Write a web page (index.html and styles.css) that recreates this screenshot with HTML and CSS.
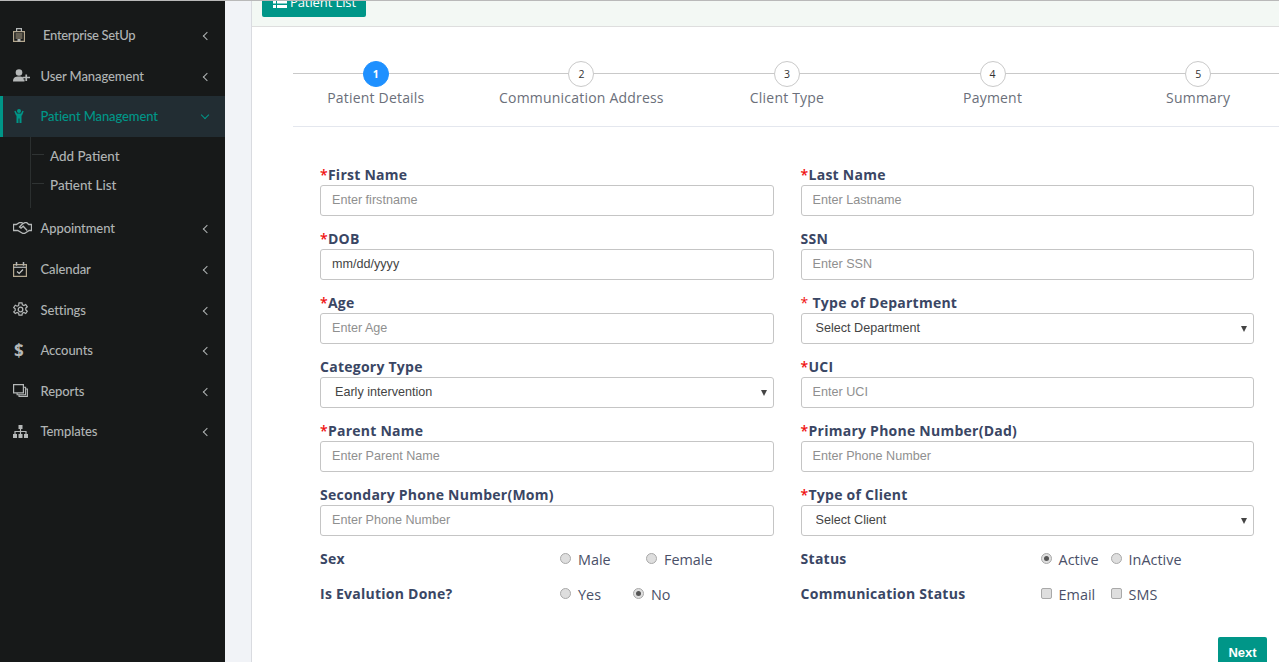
FILE: index.html
```html
<!DOCTYPE html>
<html lang="en">
<head>
<meta charset="utf-8">
<title>Patient Details</title>
<link rel="stylesheet" href="styles.css">
</head>
<body>
<div class="topline"></div>
<div class="app">
  <aside class="sidebar">
    <ul class="menu">
      <li class="item"><span class="ico-box"><svg class="ico ico-hosp" viewBox="0 0 12 14"><path d="M.6 3.600h10.800v9.800H.6z" fill="none" stroke="#b5a88f" stroke-width="1.200"/><path d="M3.600 3.500V.7h4.800v2.800" fill="none" stroke="#b5b8b8" stroke-width="1.200"/><path d="M2.500 6h7M2.500 8h7M2.500 10h7" stroke="#b5a88f" stroke-width="1"/><path d="M4.500 11h3v2.500h-3z" fill="#b5b8b8"/></svg></span><span class="label label-first">Enterprise SetUp</span><span class="chev"></span></li>
      <li class="item"><span class="ico-box"><svg class="ico ico-user" viewBox="0 0 17 13"><circle cx="6" cy="3.500" r="3.300" fill="#b5b8b8"/><path d="M0 12.500c0-4 2-5 6-5 2 0 3.500.4 4.500 1.500v1.500h1v2z" fill="#b5b8b8"/><path d="M9.500 8.500h7.500M13.250 5.500v6.500" stroke="#b5b8b8" stroke-width="1.700"/></svg></span><span class="label">User Management</span><span class="chev"></span></li>
      <li class="item active"><span class="ico-box"><svg class="ico ico-patient" viewBox="0 0 10 14"><circle cx="5" cy="2" r="2" fill="#009688"/><path d="M.3 2.200l1.300-.5L3 4.500h4l1.400-2.800 1.300.5L8 6.500H7.500V14H5.500V9.500h-1V14H2.500V6.500H2z" fill="#009688"/></svg></span><span class="label">Patient Management</span><span class="chev down"></span></li>
      <li class="sub">
        <a class="sub-link">Add Patient</a>
        <a class="sub-link">Patient List</a>
      </li>
      <li class="item"><span class="ico-box"><svg class="ico ico-hand" viewBox="0 0 19 12"><path d="M.5 2.500h2.800l3-1.800h2.500l1.500.8 1.500-.8h2l2 1.800h2.700v6h-2.300l-4.700 3h-1.500l-5.300-3H.5z" fill="none" stroke="#b5b8b8" stroke-width="1.300"/><path d="M9.800 1.500L6.500 5l1.500 1.200 2.200-2 4 4.300" fill="none" stroke="#b5b8b8" stroke-width="1.300"/></svg></span><span class="label">Appointment</span><span class="chev"></span></li>
      <li class="item"><span class="ico-box"><svg class="ico ico-cal" viewBox="0 0 14 15"><path d="M.6 2.600h12.800v11.800H.6z" fill="none" stroke="#b5a88f" stroke-width="1.200"/><path d="M.6 5.300h12.800" stroke="#b5b8b8" stroke-width="1.200"/><path d="M3.500 0v3.800M10.500 0v3.800" stroke="#b5b8b8" stroke-width="1.500"/><path d="M4 9.500l2.200 2 3.800-4" fill="none" stroke="#c5c8c8" stroke-width="1.200"/></svg></span><span class="label">Calendar</span><span class="chev"></span></li>
      <li class="item"><span class="ico-box"><svg class="ico ico-std" viewBox="0 0 15 15"><path d="M6 .8h3l.4 2 1.500.7 1.800-1 1.600 2.300-1.500 1.300v1.800l1.500 1.300-1.600 2.300-1.800-1-1.500.7-.4 2H6l-.4-2-1.500-.7-1.800 1L.7 9.900l1.500-1.300V6.800L.7 5.500l1.600-2.300 1.800 1 1.500-.7z" fill="none" stroke="#b5b8b8" stroke-width="1.200"/><circle cx="7.500" cy="7.500" r="2.300" fill="none" stroke="#b5b8b8" stroke-width="1.300"/></svg></span><span class="label">Settings</span><span class="chev"></span></li>
      <li class="item"><span class="ico-box"><span class="dollar">$</span></span><span class="label">Accounts</span><span class="chev"></span></li>
      <li class="item"><span class="ico-box"><svg class="ico ico-rep" viewBox="0 0 15 13"><path d="M.6.6h9.800v8.300H.6z" fill="none" stroke="#b5b8b8" stroke-width="1.200"/><path d="M10.400 3.200h2.200v7.500H4.100V8.900" fill="none" stroke="#b5b8b8" stroke-width="1.100"/><path d="M12.600 5h1.800v7.400H6v-1.700" fill="none" stroke="#b5b8b8" stroke-width="1.100"/></svg></span><span class="label">Reports</span><span class="chev"></span></li>
      <li class="item"><span class="ico-box"><svg class="ico ico-rep" viewBox="0 0 15 13"><path d="M5.500 0h4v4h-4zM0 9h4v4H0zM5.500 9h4v4h-4zM11 9h4v4h-4z" fill="#b5b8b8"/><path d="M2 9V6.500h11V9M7.500 4v5" fill="none" stroke="#b5b8b8" stroke-width="1.200"/></svg></span><span class="label">Templates</span><span class="chev"></span></li>
    </ul>
  </aside>
  <div class="gutter"></div>
  <main class="main">
    <header class="band">
      <a class="btn-list"><svg class="list-ico" viewBox="0 0 14 12"><path d="M0 0h3v3H0zM4 0h10v3H4zM0 4.500h3v3H0zM4 4.500h10v3H4zM0 9h3v3H0zM4 9h10v3H4z" fill="#fff"/></svg>Patient List</a>
    </header>
    <section class="panel">
      <div class="steps">
        <div class="step current"><span class="dot">1</span><span class="step-name">Patient Details</span></div>
        <div class="step"><span class="dot">2</span><span class="step-name">Communication Address</span></div>
        <div class="step"><span class="dot">3</span><span class="step-name">Client Type</span></div>
        <div class="step"><span class="dot">4</span><span class="step-name">Payment</span></div>
        <div class="step"><span class="dot">5</span><span class="step-name">Summary</span></div>
      </div>
      <form class="form">
        <div class="field"><label class="flabel"><b class="req">*</b>First Name</label><input class="control" placeholder="Enter firstname"></div>
        <div class="field"><label class="flabel"><b class="req">*</b>Last Name</label><input class="control" placeholder="Enter Lastname"></div>
        <div class="field"><label class="flabel"><b class="req">*</b>DOB</label><input class="control" value="mm/dd/yyyy"></div>
        <div class="field"><label class="flabel">SSN</label><input class="control" placeholder="Enter SSN"></div>
        <div class="field"><label class="flabel"><b class="req">*</b>Age</label><input class="control" placeholder="Enter Age"></div>
        <div class="field"><label class="flabel"><b class="req thin">*</b> Type of Department</label><div class="select-wrap"><select class="control select"><option>Select Department</option></select></div></div>
        <div class="field"><label class="flabel">Category Type</label><div class="select-wrap"><select class="control select"><option>Early intervention</option></select></div></div>
        <div class="field"><label class="flabel"><b class="req">*</b>UCI</label><input class="control" placeholder="Enter UCI"></div>
        <div class="field"><label class="flabel"><b class="req">*</b>Parent Name</label><input class="control" placeholder="Enter Parent Name"></div>
        <div class="field"><label class="flabel"><b class="req">*</b>Primary Phone Number(Dad)</label><input class="control" placeholder="Enter Phone Number"></div>
        <div class="field"><label class="flabel">Secondary Phone Number(Mom)</label><input class="control" placeholder="Enter Phone Number"></div>
        <div class="field"><label class="flabel"><b class="req">*</b>Type of Client</label><div class="select-wrap"><select class="control select"><option>Select Client</option></select></div></div>

        <div class="opt-row"><span class="flabel">Sex</span><div class="opts"><label class="opt opt-wide"><input type="radio" name="sex" class="tick">Male</label><label class="opt"><input type="radio" name="sex" class="tick">Female</label></div></div>
        <div class="opt-row"><span class="flabel">Status</span><div class="opts"><label class="opt opt-status"><input type="radio" name="st" class="tick" checked>Active</label><label class="opt"><input type="radio" name="st" class="tick">InActive</label></div></div>
        <div class="opt-row"><span class="flabel">Is Evalution Done?</span><div class="opts"><label class="opt opt-yes"><input type="radio" name="ev" class="tick">Yes</label><label class="opt"><input type="radio" name="ev" class="tick" checked>No</label></div></div>
        <div class="opt-row"><span class="flabel">Communication Status</span><div class="opts"><label class="opt opt-status"><input type="checkbox" class="tick box">Email</label><label class="opt"><input type="checkbox" class="tick box">SMS</label></div></div>
      </form>
      <div class="actions"><a class="btn-next">Next</a></div>
    </section>
  </main>
</div>
</body>
</html>
```
FILE: styles.css
```css
* { box-sizing: border-box; }
html, body { margin: 0; height: 662px; overflow: hidden; }
body { background: #fff; font-family: "Open Sans", sans-serif; }
.topline { height: 1px; background: #b9b9b9; }
.app { display: flex; height: 661px; }

.sidebar { width: 225px; flex: none; background: #171919; }
.menu { list-style: none; margin: 0; padding: 14px 0 0; }
.item { display: flex; align-items: center; height: 40.6px; padding-left: 13px; color: #b0b4b4; font: 500 13px "Lato", sans-serif; letter-spacing: -.1px; }
.ico-box { display: flex; width: 27.5px; flex: none; }
.ico { display: block; }
.ico-hosp { width: 12px; height: 14px; }
.ico-user { width: 17px; height: 13px; }
.ico-patient { width: 10px; height: 14px; margin-left: 1px; }
.ico-hand { width: 19px; height: 12px; }
.ico-cal { width: 14px; height: 15px; }
.ico-std { width: 15px; height: 15px; }
.ico-rep { width: 15px; height: 13px; }
.label { flex: 1; }
.label-first { margin-left: 2.500px; letter-spacing: -.3px; }
.dollar { color: #b5b8b8; font: 700 17px/15px "Open Sans", sans-serif; margin-left: 1px; }
.chev { width: 6px; height: 6px; border-left: 1.400px solid #b0b4b4; border-bottom: 1.400px solid #b0b4b4; transform: rotate(45deg); margin-right: 15px; margin-top: 2px; }
.chev.down { transform: rotate(-45deg); border-color: #009688; margin-right: 17px; margin-top: -2px; }
.active { background: #222d33; color: #009688; border-left: 3px solid #009688; padding-left: 10px; }
.sub { height: 71.4px; margin-left: 30px; border-left: 1px solid #2b2f2f; padding-top: 4.4px; display: flex; flex-direction: column; }
.sub-link { display: flex; align-items: center; height: 29px; color: #b0b4b4; font: 500 13.400px "Lato", sans-serif; }
.sub-link::before { content: ""; width: 12px; height: 1px; background: #2f3333; margin: 0 6px 2px 1px; }

.gutter { width: 27px; flex: none; background: #f1f3f7; border-right: 1px solid #d9dbe0; }
.main { flex: 1; min-width: 0; }
.band { height: 26px; background: #f3f8f4; border-bottom: 1px solid #dedede; padding-left: 10px; overflow: hidden; }
.btn-list { display: flex; align-items: center; width: 104px; height: 30px; margin-top: -14px; padding-left: 11px; background: #009688; border-radius: 2px; color: #fff; font-size: 13px; letter-spacing: -.1px; }
.list-ico { width: 14px; height: 12px; margin-right: 3px; }

.panel { padding: 0 0 0 41px; }
.steps { position: relative; display: grid; grid-template-columns: repeat(5, 205.6px); margin-left: -20px; padding-top: 34px; height: 99px; width: 1007px; }
.steps::after { content: ""; position: absolute; left: 20px; right: -30px; bottom: -1px; height: 1px; background: #e4e7ee; }
.steps::before { content: ""; position: absolute; left: 20px; right: -30px; top: 46px; height: 1px; background: #c9c9c9; }
.step { position: relative; display: flex; flex-direction: column; align-items: center; }
.dot { width: 26px; height: 26px; border: 1px solid #c9c9c9; border-radius: 50%; background: #fff; color: #333; display: flex; align-items: center; justify-content: center; font: 10.500px "Open Sans", sans-serif; }
.current .dot { background: #1e90ff; border-color: #1e90ff; color: #fff; font-weight: 700; }
.step-name { margin-top: 1px; color: #6b6f7a; font-size: 14px; line-height: 20px; white-space: nowrap; letter-spacing: .2px; }

.form { display: grid; grid-template-columns: 454px 453.4px; column-gap: 26.6px; margin: 39px 0 0 27px; }
.field { height: 64px; }
.flabel { display: block; color: #3a4664; font-size: 14px; font-weight: 700; line-height: 20px; height: 20px; letter-spacing: .25px; white-space: nowrap; }
.req { color: #f01010; font-weight: 600; }
.req.thin { font-weight: 400; }
.control { display: block; width: 100%; height: 31px; margin: 0; padding: 0 11px 2px; border: 1px solid #c5c5c5; border-radius: 3px; background: #fff; color: #444; font: 12.600px "Liberation Sans", sans-serif; outline: 0; }
.control::placeholder { color: #8f8f8f; opacity: 1; }
.select-wrap { position: relative; }
.select-wrap::after { content: ""; position: absolute; right: 7px; top: 13px; border: 3.500px solid transparent; border-top: 6px solid #444; border-bottom: 0; pointer-events: none; }
.select { appearance: none; padding-left: 14px; }

.opt-row { display: flex; align-items: flex-start; height: 34.500px; }
.opt-row .flabel { width: 240px; flex: none; }
.opts { display: flex; color: #4a5068; font-size: 14.400px; line-height: 20px; }
.opt { display: flex; align-items: flex-start; white-space: nowrap; padding-top: 1px; }
.opt-wide { width: 86px; }
.opt-yes { width: 73px; }
.opt-status { width: 70px; }
.tick { appearance: none; width: 11px; height: 11px; margin: 3px 7px 0 0; flex: none; background: #dedede; border: 1px solid #a9a9a9; border-radius: 50%; position: relative; }
.tick:checked::after { content: ""; position: absolute; left: 2px; top: 2px; width: 5px; height: 5px; border-radius: 50%; background: #555; }
.box { border-radius: 2px; }
.actions { display: flex; justify-content: flex-end; padding-right: 12px; margin-top: 19px; }
.btn-next { display: flex; align-items: center; justify-content: center; width: 49px; height: 30px; background: #009688; color: #fff; font: 700 13px "Liberation Sans", sans-serif; border-radius: 2px; }
```
